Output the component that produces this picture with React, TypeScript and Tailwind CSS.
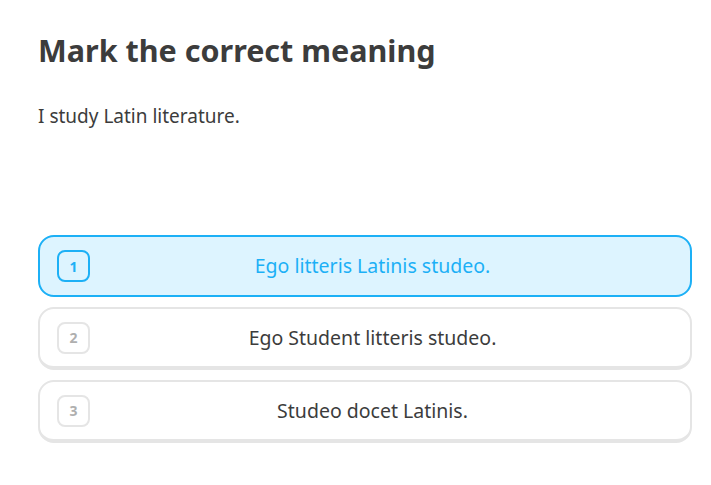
import { useState } from 'react';

const options = ['Ego litteris Latinis studeo.', 'Ego Student litteris studeo.', 'Studeo docet Latinis.'];

const App = () => {
  const [selected, setSelected] = useState(0);

  return (
    <div className="w-[711px] h-[485px] bg-white font-['Noto_Sans',sans-serif] text-[#3c3c3c]">
      <div className="pl-[38px] pr-[19px] pt-[28px]">
        <h1 className="text-[30.5px] leading-[44px] font-bold">Mark the correct meaning</h1>
        <p className="mt-[31px] text-[19px] leading-[26px]">I study Latin literature.</p>
        <div className="mt-[106px] flex flex-col gap-[10px]">
          {options.map((text, i) => {
            const isSel = selected === i;
            return (
              <button
                key={text}
                onClick={() => setSelected(i)}
                className={`flex items-center rounded-[16px] border-2 pl-[17px] pr-[51px] ${
                  isSel
                    ? 'h-[62px] bg-[#ddf4ff] border-[#1cb0f6] text-[#1cb0f6]'
                    : 'h-[63px] bg-white border-[#e5e5e5] border-b-4 text-[#3c3c3c]'
                }`}
              >
                <span
                  className={`flex items-center justify-center w-[33px] h-[32px] rounded-[8px] border-2 text-[14px] font-bold ${
                    isSel ? 'border-[#1cb0f6] text-[#1cb0f6]' : 'border-[#e5e5e5] text-[#afafaf]'
                  }`}
                >
                  {i + 1}
                </span>
                <span className="flex-1 ml-4 text-center text-[19.5px]">{text}</span>
              </button>
            );
          })}
        </div>
      </div>
    </div>
  );
};

export default App;
